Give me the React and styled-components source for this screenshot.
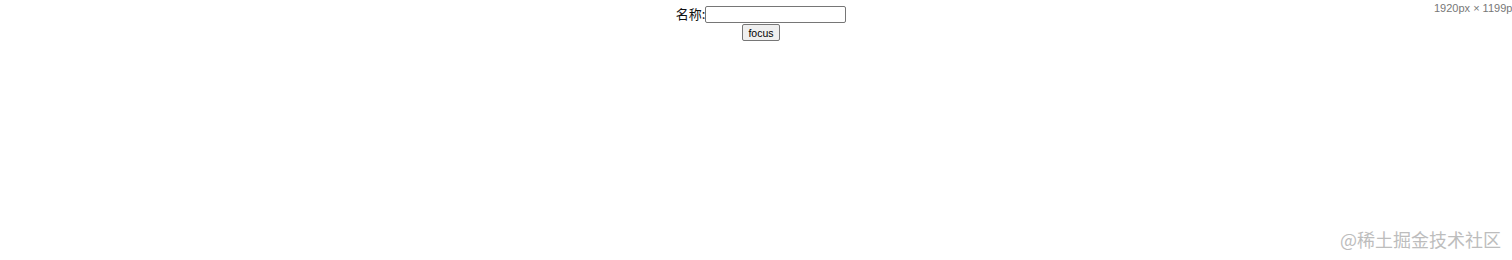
import React, { useRef } from "react";
import styled, { createGlobalStyle } from "styled-components";

const GlobalStyle = createGlobalStyle`
  html, body {
    margin: 0;
    padding: 0;
    background: #fff;
  }
  body {
    width: 1512px;
    height: 260px;
    overflow: hidden;
    position: relative;
    font-family: "Microsoft YaHei", "Noto Sans CJK SC", "Liberation Sans", sans-serif;
  }
`;

const Page = styled.div`
  display: flex;
  flex-direction: column;
  align-items: center;
  padding: 5px 0 0 10px;
`;

const Row = styled.div`
  display: flex;
  align-items: center;
  height: 18px;
`;

const Label = styled.label`
  font-size: 13px;
  color: #111;
  line-height: 18px;
`;

const Input = styled.input`
  box-sizing: border-box;
  width: 141px;
  height: 17px;
  margin: 0;
  padding: 1px 2px;
  border: 1px solid #767676;
  border-radius: 2px;
  font-size: 10.5px;
  outline: none;
`;

const Button = styled.button`
  box-sizing: border-box;
  margin-top: 1px;
  height: 17px;
  padding: 0 5px;
  border: 1px solid #767676;
  border-radius: 2px;
  background: #efefef;
  color: #000;
  font-family: "Liberation Sans", Arial, sans-serif;
  font-size: 10.5px;
  line-height: 14px;
  cursor: pointer;
`;

const Dimensions = styled.div`
  position: absolute;
  top: 2px;
  left: 1434px;
  white-space: nowrap;
  font-family: "Liberation Sans", Arial, sans-serif;
  font-size: 11px;
  color: #777;
`;

const Watermark = styled.div`
  position: absolute;
  top: 226px;
  left: 1340px;
  white-space: nowrap;
  font-family: "Noto Sans CJK SC", sans-serif;
  font-size: 18px;
  line-height: 26px;
  color: #bdbdbd;
`;

export default function App() {
  const inputRef = useRef(null);

  return (
    <>
      <GlobalStyle />
      <Page>
        <Row>
          <Label htmlFor="name">名称:</Label>
          <Input id="name" ref={inputRef} type="text" />
        </Row>
        <Button onClick={() => inputRef.current && inputRef.current.focus()}>
          focus
        </Button>
      </Page>
      <Dimensions>1920px × 1199px</Dimensions>
      <Watermark>@稀土掘金技术社区</Watermark>
    </>
  );
}
